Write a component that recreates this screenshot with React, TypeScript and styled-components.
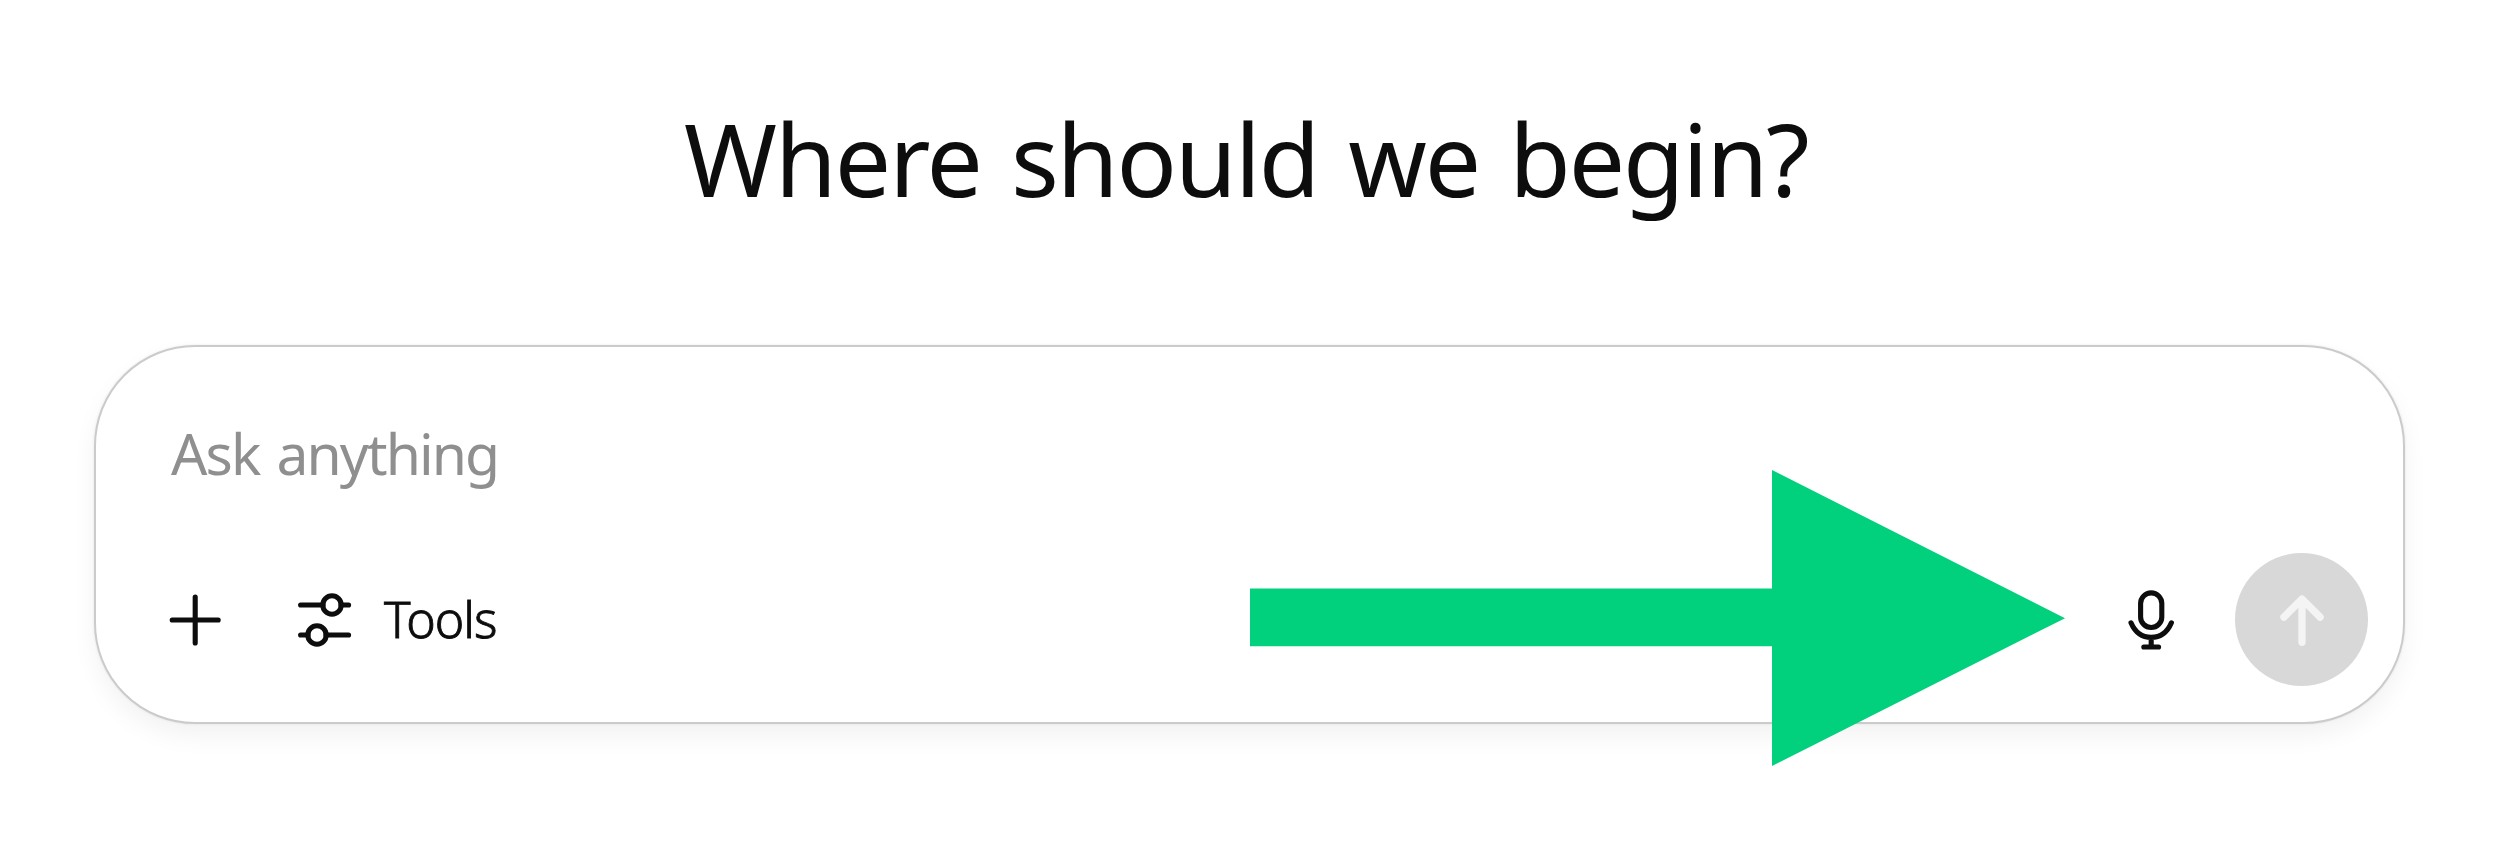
import React from "react";
import styled, { createGlobalStyle } from "styled-components";

const GlobalStyle = createGlobalStyle`
  * {
    box-sizing: border-box;
  }
  body {
    margin: 0;
    background: #fff;
  }
`;

const Page = styled.main`
  position: relative;
  width: 2500px;
  height: 864px;
  overflow: hidden;
  padding: 98px 95px 0 94px;
  background: #fff;
  color: #0d0d0d;
  font-family: "Noto Sans", "Open Sans", sans-serif;
`;

const Title = styled.h1`
  margin: 0 0 127px;
  height: 120px;
  padding-left: 590px;
  font-size: 100px;
  font-weight: 400;
  line-height: 120px;
  letter-spacing: -2px;
  word-spacing: 6px;
  white-space: nowrap;
`;

const Composer = styled.section`
  display: flex;
  flex-direction: column;
  height: 379px;
  padding: 71px 35px 0 73px;
  border: 2px solid #cbcbcb;
  border-radius: 101px;
  background: #fff;
  box-shadow: 0 0 3px rgba(0, 0, 0, 0.08), 0 12px 24px rgba(0, 0, 0, 0.05);
`;

const Placeholder = styled.div`
  height: 70px;
  padding-left: 2px;
  color: #8f8f8f;
  font-size: 57px;
  line-height: 70px;
  letter-spacing: -1.9px;
  word-spacing: 4px;
  white-space: nowrap;
`;

const Toolbar = styled.div`
  display: flex;
  align-items: center;
  height: 133px;
  margin-top: 65px;
`;

const IconButton = styled.button<{ size: number; gap?: number }>`
  display: flex;
  align-items: center;
  justify-content: center;
  flex-shrink: 0;
  width: ${props => props.size}px;
  height: ${props => props.size}px;
  margin-right: ${props => props.gap || 0}px;
  padding: 0;
  border: none;
  background: none;
  color: inherit;
`;

const ToolsButton = styled.button`
  display: flex;
  align-items: center;
  gap: 32px;
  padding: 0;
  border: none;
  background: none;
  color: inherit;
  font-family: inherit;
  font-size: 50px;
  font-weight: 300;
  line-height: 60px;
  letter-spacing: -0.9px;
`;

const ToolsLabel = styled.span`
  padding-bottom: 2px;
  -webkit-text-stroke: 0.9px currentColor;
`;

const Spacer = styled.div`
  flex: 1;
`;

const SendButton = styled(IconButton)`
  border-radius: 50%;
  background: #d8d8d8;
  color: #f4f4f4;
`;

const Stroked = styled.svg<{ weight?: number }>`
  display: block;
  flex-shrink: 0;
  fill: none;
  stroke: currentColor;
  stroke-width: ${props => props.weight || 5.1};
  stroke-linecap: round;
  stroke-linejoin: round;
`;

const Pointer = styled.svg`
  position: absolute;
  left: 1250px;
  top: 470px;
  fill: #01d07d;
`;

const Plus = () => (
  <Stroked width="52" height="52" viewBox="0 0 52 52">
    <path d="M3.2 26H49.2M26.2 3V49" />
  </Stroked>
);

const Sliders = () => (
  <Stroked width="54" height="54" viewBox="0 0 54 54">
    <path d="M2.6 12H25M43 12H50.6M2.6 42H10M28 42H50.6" />
    <circle cx="34" cy="12" r="9.2" />
    <circle cx="19" cy="42" r="9.2" />
  </Stroked>
);

const Mic = () => (
  <Stroked width="60" height="60" viewBox="0 0 60 60">
    <rect x="19.6" y="2.9" width="21.2" height="34.6" rx="10.6" />
    <path d="M10 32.8C13.7 41.5 20.7 47.4 30.2 47.4C39.7 47.4 46.7 41.5 50.4 32.8M30.2 47.4V57M22.8 57H37.6" />
  </Stroked>
);

const ArrowUp = () => (
  <Stroked width="60" height="60" viewBox="0 0 60 60" weight={7.3}>
    <path d="M30 9.2V52.3M11.9 27.1L30 9L48.1 27.1" />
  </Stroked>
);

export default () => (
  <>
    <GlobalStyle />
    <Page>
      <Title>Where should we begin?</Title>
      <Composer>
        <Placeholder>Ask anything</Placeholder>
        <Toolbar>
          <IconButton size={52} gap={77} aria-label="Add">
            <Plus />
          </IconButton>
          <ToolsButton>
            <Sliders />
            <ToolsLabel>Tools</ToolsLabel>
          </ToolsButton>
          <Spacer />
          <IconButton size={60} gap={54} aria-label="Dictate">
            <Mic />
          </IconButton>
          <SendButton size={133} aria-label="Send">
            <ArrowUp />
          </SendButton>
        </Toolbar>
      </Composer>
      <Pointer width="816" height="296" viewBox="0 0 816 296">
        <path d="M0 118.5H522V0L815 148.2L522 296V176.3H0Z" />
      </Pointer>
    </Page>
  </>
);
